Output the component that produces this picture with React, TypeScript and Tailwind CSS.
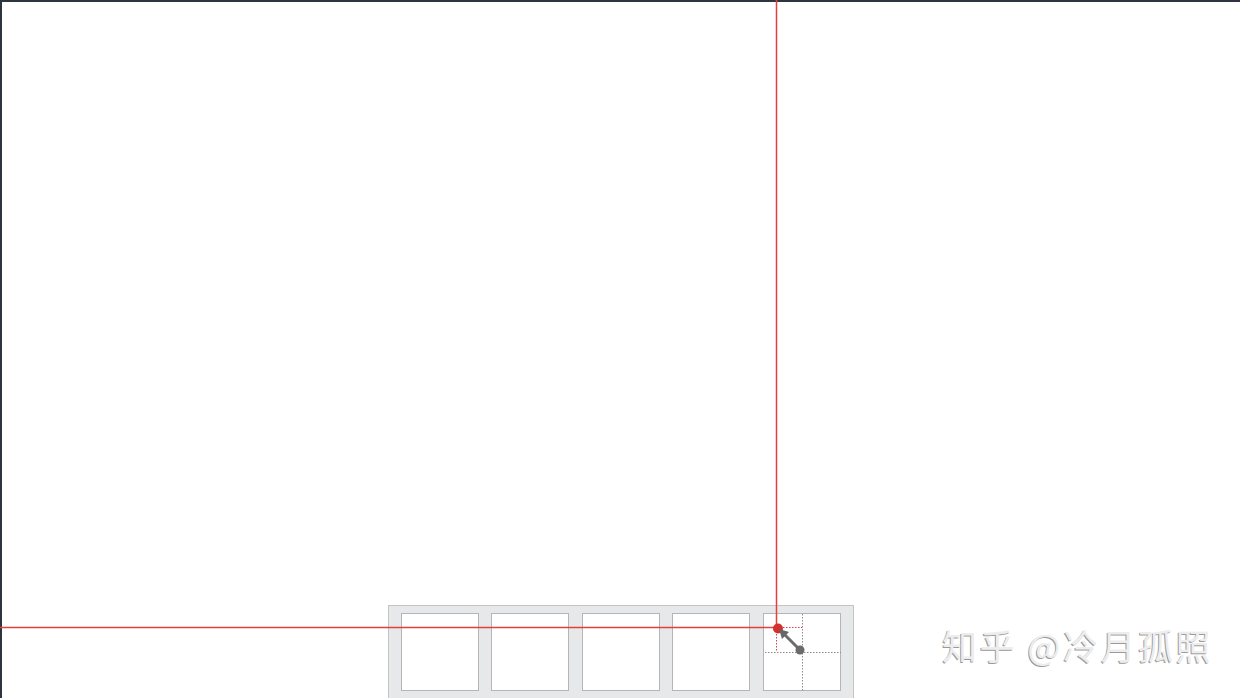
export default function App() {
  const cells = [0, 1, 2, 3];
  return (
    <div className="relative h-[698px] w-[1240px] overflow-hidden bg-white">
      <div className="flex h-full flex-col border-l-2 border-t-2 border-[#2f3540]">
        <div className="flex-1" />
        <div className="flex items-start">
          {/* tile tray */}
          <div className="ml-[386px] flex h-[93px] w-[466px] gap-[12.5px] border border-b-0 border-[#c4c4c4] bg-[#e7e8e9] px-[11.5px] pt-[7px]">
            {cells.map((i) => (
              <div key={i} className="h-[78px] w-[78px] border border-[#b5b5b5] bg-white" />
            ))}
            <div className="h-[78px] w-[78px] border border-[#b5b5b5] bg-white" />
          </div>
          <div
            className="ml-[88px] mt-[15px] whitespace-nowrap text-[35px] leading-[50px] tracking-[2.5px] text-[#ededed] [text-shadow:-1px_1px_0_#9a9a9a]"
            style={{ fontFamily: '"Noto Sans CJK SC", "Noto Sans", sans-serif' }}
          >
            知乎 @冷月孤照
          </div>
        </div>
      </div>

      {/* guide lines and handle drawn over the page */}
      <svg className="pointer-events-none absolute inset-0" width="1240" height="698">
        <line x1="776.5" y1="0" x2="776.5" y2="628" stroke="#e0403f" strokeWidth="1.5" />
        <line x1="0" y1="627.5" x2="776" y2="627.5" stroke="#e0403f" strokeWidth="1.5" />
        {/* dotted grid in last cell */}
        <line x1="802.5" y1="614" x2="802.5" y2="691" stroke="#8a8a8a" strokeWidth="1" strokeDasharray="1.5 1.5" />
        <line x1="765" y1="652.5" x2="841" y2="652.5" stroke="#8a8a8a" strokeWidth="1" strokeDasharray="1.5 1.5" />
        <line x1="777" y1="627.5" x2="802" y2="627.5" stroke="#e0403f" strokeWidth="1" strokeDasharray="1.5 1.5" />
        <line x1="776.5" y1="628" x2="776.5" y2="652" stroke="#e0403f" strokeWidth="1" strokeDasharray="1.5 1.5" />
        {/* handle */}
        <circle cx="778" cy="628.5" r="5" fill="#d6302e" />
        <line x1="783" y1="633" x2="799" y2="649" stroke="#6c6c6c" strokeWidth="3" />
        <polygon points="779,629 789,632 782,639" fill="#666" />
        <circle cx="800" cy="650" r="4.5" fill="#6a6a6a" />
      </svg>
    </div>
  );
}
